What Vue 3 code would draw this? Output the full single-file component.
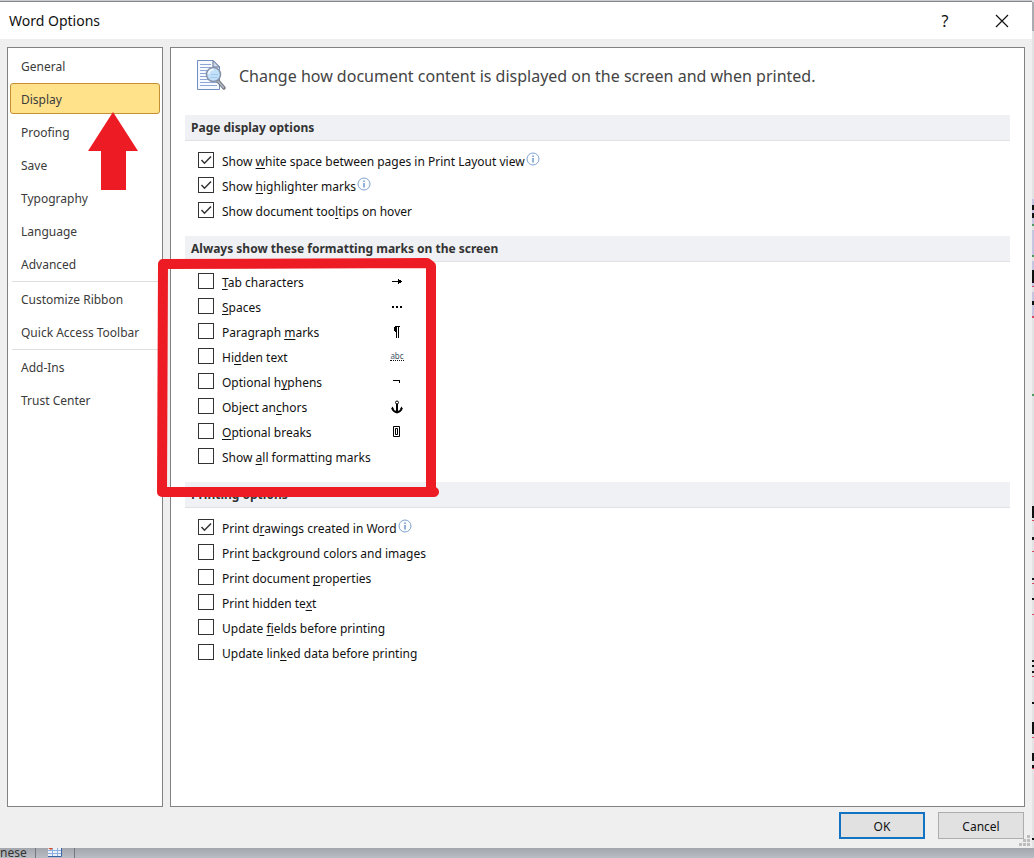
<script setup>
import { ref } from 'vue'

const navGroups = [
  ['General', 'Display', 'Proofing', 'Save', 'Typography', 'Language', 'Advanced'],
  ['Customize Ribbon', 'Quick Access Toolbar'],
  ['Add-Ins', 'Trust Center'],
]
const active = ref('Display')

// An ampersand marks the access key of a label.
const option = (id, label, extra = {}) => {
  const at = label.indexOf('&')
  return {
    id,
    before: label.slice(0, at),
    key: label.slice(at + 1, at + 2),
    after: label.slice(at + 2),
    checked: false,
    info: false,
    mark: '',
    ...extra,
  }
}

const sections = ref([
  {
    title: 'Page display options',
    options: [
      option('white-space', 'Show &white space between pages in Print Layout view', { checked: true, info: true }),
      option('highlighter', 'Show &highlighter marks', { checked: true, info: true }),
      option('tooltips', 'Show document too&ltips on hover', { checked: true }),
    ],
  },
  {
    title: 'Always show these formatting marks on the screen',
    marks: true,
    options: [
      option('tabs', '&Tab characters', { mark: 'tab' }),
      option('spaces', '&Spaces', { mark: 'space' }),
      option('paragraphs', 'Paragraph &marks', { mark: 'paragraph' }),
      option('hidden', 'Hi&dden text', { mark: 'hidden' }),
      option('hyphens', 'Optional h&yphens', { mark: 'hyphen' }),
      option('anchors', 'Object an&chors', { mark: 'anchor' }),
      option('breaks', '&Optional breaks', { mark: 'break' }),
      option('all', 'Show &all formatting marks'),
    ],
  },
  {
    title: 'Printing options',
    options: [
      option('drawings', 'Print d&rawings created in Word', { checked: true, info: true }),
      option('background', 'Print &background colors and images'),
      option('properties', 'Print document &properties'),
      option('print-hidden', 'Print hidden te&xt'),
      option('fields', 'Update &fields before printing'),
      option('linked', 'Update lin&ked data before printing'),
    ],
  },
])
</script>

<template>
  <div class="desktop">
    <div class="dialog" role="dialog" aria-labelledby="dialog-title">
      <header class="titlebar">
        <h1 id="dialog-title">Word Options</h1>
        <button class="caption help" type="button" aria-label="Help">?</button>
        <button class="caption" type="button" aria-label="Close">
          <svg width="14" height="14" viewBox="0 0 14 14"><path d="M1 1 13 13M13 1 1 13" fill="none" stroke="#111" stroke-width="1.2" /></svg>
        </button>
      </header>

      <div class="body">
        <nav class="panel nav">
          <ul v-for="group in navGroups" :key="group[0]">
            <li v-for="item in group" :key="item">
              <button type="button" class="nav-item" :class="{ active: item === active }" @click="active = item">{{ item }}</button>
            </li>
          </ul>
        </nav>

        <main class="panel content">
          <div class="intro">
            <svg width="32" height="32" viewBox="0 0 32 32">
              <path d="M2.5 1.5H18L24.5 8V30.5H2.5Z" fill="#f6f9fe" stroke="#6f8fc4" />
              <path d="M18 1.5V8H24.5Z" fill="#cfdcf0" stroke="#5f7193" stroke-linejoin="round" />
              <path d="M5 5.5H16M5 8.5H16M5 11.5H13M5 14.5H12M5 17.5H12M5 20.5H14M5 23.5H22M5 26.5H22" stroke="#8ea6d3" />
              <path d="M23 22 29 29" stroke="#777b86" stroke-width="3.500" stroke-linecap="round" />
              <path d="M23 22 28.500 28.500" stroke="#b4b8c4" stroke-width="1.500" stroke-linecap="round" />
              <circle cx="18.500" cy="15.500" r="7" fill="#c3e0fa" stroke="#8692a8" stroke-width="1.600" />
              <path d="M13.500 15a5 5 0 0 1 5-4.500" fill="none" stroke="#eef8ff" stroke-width="2" />
              <path d="M15 18.500H23M16 15.500H23" stroke="#a3c9ee" />
            </svg>
            <p>Change how document content is displayed on the screen and when printed.</p>
          </div>

          <section v-for="section in sections" :key="section.title">
            <h2>{{ section.title }}</h2>
            <ul class="options" :class="{ marks: section.marks }">
              <li v-for="opt in section.options" :key="opt.id">
                <span class="box">
                  <input :id="opt.id" v-model="opt.checked" type="checkbox" />
                  <svg class="tick" width="16" height="16" viewBox="0 0 16 16"><path d="M3.500 8 6.500 11.200 13 4.500" fill="none" stroke="#333" stroke-width="1.500" /></svg>
                </span>
                <label :for="opt.id">{{ opt.before }}<u>{{ opt.key }}</u>{{ opt.after }}</label>
                <svg v-if="opt.info" class="info" width="14" height="14" viewBox="0 0 14 14">
                  <circle cx="7" cy="7" r="6" fill="#fbfdff" stroke="#7fa3cf" />
                  <path d="M7 6V10.500M7 3.500V5" stroke="#4f7fbd" stroke-width="1.200" />
                </svg>
                <span v-if="opt.mark" class="mark">
                  <svg v-if="opt.mark === 'tab'" width="16" height="16" viewBox="0 0 16 16"><path d="M3 7H9V5H10V6H12V7H13V8H12V9H10V10H9V8H3Z" /></svg>
                  <svg v-else-if="opt.mark === 'space'" width="16" height="16" viewBox="0 0 16 16"><path d="M3 7h2v2h-2zM7 7h2v2h-2zM11 7h2v2h-2z" /></svg>
                  <svg v-else-if="opt.mark === 'paragraph'" width="16" height="16" viewBox="0 0 16 16"><path d="M6 2H11V3H10V14H9V3H8V14H7V8H6V7H5V3H6Z" /></svg>
                  <span v-else-if="opt.mark === 'hidden'" class="abc">abc</span>
                  <svg v-else-if="opt.mark === 'hyphen'" width="16" height="16" viewBox="0 0 16 16"><path d="M4 6H11V9H10V7H4Z" /></svg>
                  <svg v-else-if="opt.mark === 'anchor'" width="16" height="16" viewBox="0 0 16 16">
                    <path d="M8 5V14" stroke="#000" stroke-width="2" />
                    <circle cx="8" cy="3.500" r="1.500" fill="#fff" stroke="#000" />
                    <path d="M2 10 3.500 7.500 5 10H4.500Q5.500 12 8 12T11.500 10H11L12.500 7.500 14 10H13.500Q12.500 13 8 14.500 3.500 13 2.500 10Z" />
                  </svg>
                  <svg v-else width="16" height="16" viewBox="0 0 16 16"><path d="M4.500 2.500h6v10h-6zM6.500 4.500h2v6h-2z" fill="none" stroke="#000" /></svg>
                </span>
              </li>
            </ul>
          </section>
        </main>
      </div>

      <footer class="actions">
        <button type="button" class="push primary">OK</button>
        <button type="button" class="push">Cancel</button>
      </footer>

      <svg class="grip" width="12" height="12" viewBox="0 0 12 12"><path d="M8 0h3v3h-3zM4 4h3v3h-3zM8 4h3v3h-3zM0 8h3v3h-3zM4 8h3v3h-3zM8 8h3v3h-3z" fill="#bdbdbd" /></svg>
    </div>

    <div class="statusbar">
      <span class="language">nese</span>
      <span class="macro">
        <svg width="16" height="10" viewBox="0 0 16 10">
          <path d="M1 0H15V9H1Z" fill="#e9f0fa" />
          <path d="M1 2.500H15M1 5.500H15M5.500 0V9M10.500 0V9" stroke="#8fb0dc" />
          <path d="M14.500 0V8.500H1" fill="none" stroke="#3b62a4" />
          <path d="M1 0h5l-2 2z" fill="#cf4a2c" />
        </svg>
      </span>
    </div>

    <svg class="edge" width="2" height="848" viewBox="0 0 2 848">
      <path d="M0 0H2V848H0Z" fill="#e3e3e5" />
      <path d="M0 2H2V31H0Z" fill="#a9abb0" />
      <path d="M0 199h2v25h-2zM0 230h2v26h-2zM0 261h2v26h-2zM0 292h2v26h-2z" fill="#c6c6e2" />
      <path d="M0 205h2v5h-2zM0 213h2v5h-2zM0 270h2v13h-2zM0 301h2v4h-2zM0 506h2v12h-2zM0 537h2v3h-2zM0 578h2v2h-2zM0 598h2v2h-2zM0 660h2v2h-2zM0 665h2v2h-2zM0 671h2v2h-2zM0 702h2v2h-2zM0 722h2v12h-2zM0 753h2v8h-2zM0 765h2v3h-2zM0 838h2v2h-2z" fill="#111" />
      <path d="M0 286h2v1h-2zM0 316h2v2h-2zM0 520h2v1h-2zM0 551h2v1h-2zM0 583h2v1h-2zM0 614h2v1h-2zM0 676h2v1h-2zM0 737h2v1h-2zM0 768h2v1h-2z" fill="#d9455f" />
      <path d="M0 224h2v2h-2zM0 255h2v2h-2zM0 394h2v2h-2z" fill="#4c9a5c" />
    </svg>

    <svg class="arrow" width="50" height="80" viewBox="0 0 50 80"><path d="M25 0 50 39H38V78H13V39H0Z" fill="#ed1c24" /></svg>
    <svg class="frame" width="284" height="240" viewBox="0 0 284 240">
      <path d="M7 7 271 6 275 9V233L278 235H6Z" fill="none" stroke="#ed1c24" stroke-width="10" stroke-linejoin="round" />
    </svg>
  </div>
</template>

<style>
body {
  background: #b4b8be;
}
</style>

<style scoped>
.desktop {
  position: relative;
  display: flex;
  flex-direction: column;
  min-height: 100vh;
  box-sizing: border-box;
  padding-top: 1px;
  overflow: hidden;
  background: #c9cbd0;
  color: #111;
  font: 12px/16px "Noto Sans", "Open Sans", sans-serif;
}
h1, h2, p, ul {
  margin: 0;
  padding: 0;
  font-weight: 400;
  list-style: none;
}
button {
  font: inherit;
  color: inherit;
}
.dialog {
  position: relative;
  flex: 1;
  display: flex;
  flex-direction: column;
  margin-right: 2px;
  border-top: 1px solid #85868a;
  background: #efefef;
}
.titlebar {
  display: flex;
  align-items: center;
  height: 37px;
  padding: 0 9px;
  background: #fff;
}
h1 {
  flex: 1;
  font-size: 14px;
}
.caption {
  display: flex;
  align-items: center;
  justify-content: center;
  width: 42px;
  height: 30px;
  padding: 0;
  border: 0;
  background: none;
}
.help {
  width: 72px;
  font-size: 16px;
}
.body {
  flex: 1;
  display: flex;
  gap: 7px;
  padding: 8px 7px 0;
}
.panel {
  box-sizing: border-box;
  border: 1px solid #828282;
  background: #fff;
}
.nav {
  flex: 0 0 156px;
  padding: 2px;
}
.nav ul + ul::before {
  content: "";
  display: block;
  height: 1px;
  margin: 0 0 1px 2px;
  background: #dcdee0;
}
.nav-item {
  display: block;
  width: 100%;
  height: 31px;
  margin-bottom: 2px;
  padding: 2px 10px 0;
  border: 1px solid transparent;
  border-radius: 3px;
  background: none;
  color: #3b3b3b;
  text-align: left;
  white-space: nowrap;
}
.nav-item.active {
  border-color: #c58e33;
  background: #ffe28a;
}
.content {
  flex: 1;
  padding: 8px 14px;
}
.intro {
  display: flex;
  align-items: center;
  gap: 12px;
  height: 38px;
  margin-bottom: 21px;
  padding-left: 10px;
  color: #444;
  font-size: 16px;
}
.intro p {
  padding-top: 2px;
}
h2 {
  height: 25px;
  padding-left: 6px;
  border-bottom: 1px solid #dfe1e5;
  background: #f0f1f4;
  color: #333;
  font-size: 12px;
  font-weight: 700;
  line-height: 25px;
}
.options {
  padding: 7px 13px 13px;
}
.options li {
  display: flex;
  align-items: center;
  height: 25px;
}
.box {
  display: grid;
  margin: 0 8px 2px 0;
}
.box > * {
  grid-area: 1 / 1;
}
.box input {
  appearance: none;
  box-sizing: border-box;
  width: 16px;
  height: 16px;
  margin: 0;
  border: 1px solid #333;
  background: #fff;
}
.tick {
  visibility: hidden;
  pointer-events: none;
}
.box input:checked + .tick {
  visibility: visible;
}
label {
  padding-top: 2px;
}
u {
  text-decoration-skip-ink: none;
  text-underline-offset: 2px;
}
.marks label {
  width: 162px;
}
.info {
  margin: 0 0 3px 1px;
}
.mark {
  display: flex;
  justify-content: center;
  width: 26px;
}
.abc {
  border-bottom: 1px dotted #111;
  color: #456;
  font-size: 8px;
  line-height: 8px;
}
.actions {
  display: flex;
  justify-content: flex-end;
  gap: 13px;
  padding: 5px 8px 9px;
}
.push {
  box-sizing: border-box;
  width: 86px;
  height: 27px;
  padding: 2px 0 0;
  border: 1px solid #adadad;
  background: #e1e1e1;
}
.push.primary {
  border: 2px solid #1173c1;
}
.grip {
  position: absolute;
  right: 1px;
  bottom: 1px;
}
.statusbar {
  display: flex;
  height: 10px;
  overflow: hidden;
  background: linear-gradient(#a3a6ab, #b9bdc4);
  color: #333;
}
.language {
  width: 35px;
  border-right: 1px solid #75787d;
  line-height: 10px;
}
.macro {
  display: flex;
  justify-content: center;
  width: 38px;
  border-right: 1px solid #75787d;
}
.edge {
  position: absolute;
  top: 0;
  right: 0;
}
.arrow {
  position: absolute;
  top: 112px;
  left: 88px;
}
.frame {
  position: absolute;
  top: 257px;
  left: 156px;
}
</style>
